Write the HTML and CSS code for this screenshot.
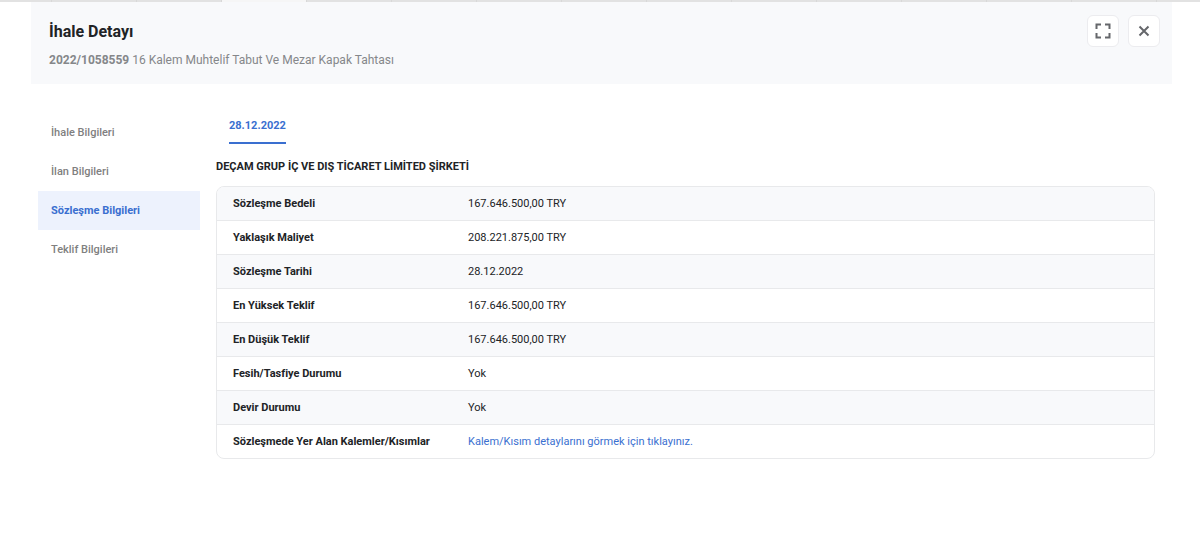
FILE: index.html
```
<!DOCTYPE html>
<html lang="tr">
<head>
  <meta charset="UTF-8">
  <meta name="viewport" content="width=device-width, initial-scale=1.0">
  <title>İhale Detayı</title>
  <link rel="stylesheet" href="styles.css">
</head>
<body>
  <div class="tab-strip">
    <span></span><span></span><span></span><span class="current"></span><span></span><span></span><span></span><span></span><span></span><span></span><span></span><span></span><span></span><span></span>
  </div>

  <div class="modal">
    <header class="modal-header">
      <div>
        <h1>İhale Detayı</h1>
        <p><strong>2022/1058559</strong> 16 Kalem Muhtelif Tabut Ve Mezar Kapak Tahtası</p>
      </div>
      <div class="modal-actions">
        <button type="button" aria-label="Tam ekran">
          <svg width="16" height="16" viewBox="0 0 16 16" fill="none" stroke="#65676b" stroke-width="2">
            <path d="M1.5 6V1.5H6M10 1.5h4.5V6M14.5 10v4.5H10M6 14.5H1.5V10"/>
          </svg>
        </button>
        <button type="button" aria-label="Kapat">
          <svg width="16" height="16" viewBox="0 0 16 16" fill="none" stroke="#65676b" stroke-width="2">
            <path d="M3.5 3.5l9 9M12.5 3.5l-9 9"/>
          </svg>
        </button>
      </div>
    </header>

    <div class="modal-body">
      <nav class="side-nav">
        <a href="#ihale">İhale Bilgileri</a>
        <a href="#ilan">İlan Bilgileri</a>
        <a href="#sozlesme" class="active">Sözleşme Bilgileri</a>
        <a href="#teklif">Teklif Bilgileri</a>
      </nav>

      <main class="content">
        <a href="#sozlesme" class="date-tab">28.12.2022</a>
        <h2>DEÇAM GRUP İÇ VE DIŞ TİCARET LİMİTED ŞİRKETİ</h2>
        <table class="details">
          <tbody>
            <tr><th scope="row">Sözleşme Bedeli</th><td>167.646.500,00 TRY</td></tr>
            <tr><th scope="row">Yaklaşık Maliyet</th><td>208.221.875,00 TRY</td></tr>
            <tr><th scope="row">Sözleşme Tarihi</th><td>28.12.2022</td></tr>
            <tr><th scope="row">En Yüksek Teklif</th><td>167.646.500,00 TRY</td></tr>
            <tr><th scope="row">En Düşük Teklif</th><td>167.646.500,00 TRY</td></tr>
            <tr><th scope="row">Fesih/Tasfiye Durumu</th><td>Yok</td></tr>
            <tr><th scope="row">Devir Durumu</th><td>Yok</td></tr>
            <tr><th scope="row">Sözleşmede Yer Alan Kalemler/Kısımlar</th><td><a href="#kalemler">Kalem/Kısım detaylarını görmek için tıklayınız.</a></td></tr>
          </tbody>
        </table>
      </main>
    </div>
  </div>
</body>
</html>
```

FILE: styles.css
```
* {
  box-sizing: border-box;
}

body {
  margin: 0;
  background: #fff;
  color: #212326;
  font-family: Roboto, sans-serif;
  font-size: 11px;
  line-height: 16px;
}

a {
  color: #3a6fd0;
  text-decoration: none;
}

.tab-strip {
  display: flex;
  height: 2px;
  background: #e2e2e2;
  overflow: hidden;
}

.tab-strip span {
  flex: 0 0 85px;
  border-right: 1px solid #d8d8d8;
}

.tab-strip span:first-child {
  flex-basis: 52px;
}

.tab-strip .current {
  background: #f6f6f6;
}

.modal {
  margin: 0 28px 0 31px;
}

.modal-header {
  display: flex;
  justify-content: space-between;
  align-items: flex-start;
  padding: 13px 12px 16px 18px;
  background: #f8f9fb;
}

.modal-header h1 {
  margin: 5px 0 8px;
  font-size: 16px;
  line-height: 24px;
}

.modal-header p {
  margin: 0;
  color: #85878a;
  font-size: 12px;
}

.modal-actions {
  display: flex;
  gap: 9px;
}

.modal-actions button {
  display: flex;
  align-items: center;
  justify-content: center;
  width: 32px;
  height: 32px;
  padding: 0;
  background: #fff;
  border: 1px solid #ececef;
  border-radius: 6px;
  cursor: pointer;
}

.modal-body {
  display: flex;
  gap: 16px;
  padding: 29px 17px 0 7px;
}

.side-nav {
  flex: 0 0 162px;
}

.side-nav a {
  display: block;
  padding: 12px 13px 11px;
  color: #808080;
  font-weight: 500;
}

.side-nav .active {
  background: #edf2fd;
  color: #3a6fd0;
  font-weight: 700;
}

.content {
  flex: 1;
}

.date-tab {
  display: inline-block;
  margin-left: 13px;
  padding: 5px 0 8px;
  border-bottom: 2px solid #3a6fd0;
  font-weight: 700;
}

.content h2 {
  margin: 15px 0 11px;
  font-size: 11px;
}

.details {
  width: 100%;
  table-layout: fixed;
  border: 1px solid #e8e9eb;
  border-radius: 8px;
  border-spacing: 0;
  overflow: hidden;
}

.details th,
.details td {
  height: 34px;
  padding: 0 16px;
  border-bottom: 1px solid #e8e9eb;
  text-align: left;
}

.details th {
  width: 235px;
  white-space: nowrap;
}

.details tr:nth-child(odd) {
  background: #f8f9fb;
}

.details tr:last-child > * {
  height: 33px;
  border-bottom: 0;
}
```
